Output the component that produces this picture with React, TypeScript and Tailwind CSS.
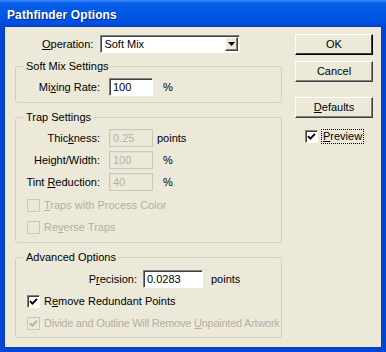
import React from 'react';

const font = 'font-["Liberation_Sans",Arial,sans-serif]';

type FieldProps = { value: string; width: string; disabled?: boolean };

const Field: React.FC<FieldProps> = ({ value, width, disabled }) =>
  disabled ? (
    <div
      className={`${width} h-[18px] flex items-center pl-[3px] border border-[#cbc8bb] bg-[#ece9d8] text-[#b3b0a2] shadow-[inset_1px_1px_0_#e2dfd2]`}
    >
      {value}
    </div>
  ) : (
    <div
      className={`${width} h-[18px] flex items-center pl-[3px] border border-t-[#808080] border-l-[#808080] border-r-white border-b-white bg-white text-black shadow-[inset_1px_1px_0_#404040]`}
    >
      {value}
    </div>
  );

const Check: React.FC<{ checked?: boolean; disabled?: boolean }> = ({ checked, disabled }) => (
  <div
    className={
      disabled
        ? 'w-[13px] h-[13px] shrink-0 flex items-center justify-center border border-[#cbc8bb] bg-[#ece9d8]'
        : 'w-[13px] h-[13px] shrink-0 flex items-center justify-center border border-t-[#808080] border-l-[#808080] border-r-white border-b-white bg-white shadow-[inset_1px_1px_0_#404040]'
    }
  >
    {checked && (
      <svg width="9" height="9" viewBox="0 0 9 9">
        <path
          d="M1 4.2 L3.4 6.6 L8 1.8"
          fill="none"
          stroke={disabled ? '#b3b0a2' : '#000'}
          strokeWidth="1.9"
        />
      </svg>
    )}
  </div>
);

const CheckRow: React.FC<{
  checked?: boolean;
  disabled?: boolean;
  tight?: boolean;
  children: React.ReactNode;
}> = ({ checked, disabled, tight, children }) => (
  <div className="h-[18px] flex items-center pl-[11px]">
    <Check checked={checked} disabled={disabled} />
    <span
      className={`ml-[4px] whitespace-nowrap ${disabled ? 'text-[#b3b0a2]' : 'text-black'} ${
        tight ? 'tracking-[-0.25px]' : ''
      }`}
    >
      {children}
    </span>
  </div>
);

const Group: React.FC<{ title: string; className: string; children: React.ReactNode }> = ({
  title,
  className,
  children,
}) => (
  <fieldset className={`min-w-0 w-[267px] border border-[#d0d0bf] rounded-[3px] ${className}`}>
    <legend className="ml-[8px] px-[2px] leading-[13px] text-black">{title}</legend>
    {children}
  </fieldset>
);

const Button: React.FC<{ children: React.ReactNode; primary?: boolean; className?: string }> = ({
  children,
  primary,
  className = '',
}) => (
  <div
    className={`w-[78px] h-[21px] flex items-center justify-center bg-[#ece9d8] text-black border border-t-white border-l-white ${
      primary
        ? 'border-r-black border-b-black shadow-[inset_-1px_-1px_0_#404040]'
        : 'border-r-[#404040] border-b-[#404040] shadow-[inset_-1px_-1px_0_#808080]'
    } ${className}`}
  >
    {children}
  </div>
);

export default function App() {
  return (
    <div className={`w-[386px] h-[352px] flex flex-col bg-[#0047d8] text-[11px] ${font} select-none`}>
      {/* title bar */}
      <div className="h-[27px] shrink-0 flex items-center pl-[7px] pt-[2px] bg-[linear-gradient(#3a8cff_0px,#0a5ee9_3px,#0058e6_50%,#0050e0_85%,#0041c9_100%)]">
        <span className="text-white font-bold text-[12px] tracking-[0.1px] [text-shadow:1px_1px_0_#0a2a8a]">
          Pathfinder Options
        </span>
      </div>

      {/* client area */}
      <div className="flex-1 mx-[4px] mb-[4px] flex bg-[#ece9d8] border-l border-r border-b border-[#0a3cc0]">
        {/* left column */}
        <div className="ml-[10px] w-[267px] flex flex-col">
          <div className="mt-[8px] h-[18px] flex items-center">
            <span className="ml-[27px]">
              <span className="underline">O</span>peration:
            </span>
            <div className="ml-[7px] w-[140px] h-[18px] flex items-center border border-t-[#808080] border-l-[#808080] border-r-white border-b-white bg-white shadow-[inset_1px_1px_0_#404040]">
              <span className="flex-1 pl-[3px]">Soft Mix</span>
              <div className="w-[13px] h-[14px] mr-[1px] flex items-center justify-center bg-[#ece9d8] border border-t-white border-l-white border-r-[#404040] border-b-[#404040] shadow-[inset_-1px_-1px_0_#808080]">
                <svg width="7" height="4" viewBox="0 0 7 4">
                  <path d="M0 0 H7 L3.5 4 Z" fill="#000" />
                </svg>
              </div>
            </div>
          </div>

          <Group title="Soft Mix Settings" className="mt-[7px] pt-[5px] pb-[6px]">
            <div className="h-[18px] flex items-center">
              <span className="w-[84px] text-right">
                Mi<span className="underline">x</span>ing Rate:
              </span>
              <div className="ml-[9px]">
                <Field value="100" width="w-[44px]" />
              </div>
              <span className="ml-[10px]">%</span>
            </div>
          </Group>

          <Group title="Trap Settings" className="mt-[8px] pt-[5px] pb-[6px] flex flex-col gap-[4px]">
            <div className="h-[18px] flex items-center">
              <span className="w-[84px] text-right">
                Thic<span className="underline">k</span>ness:
              </span>
              <div className="ml-[9px]">
                <Field value="0.25" width="w-[44px]" disabled />
              </div>
              <span className="ml-[4px]">points</span>
            </div>
            <div className="h-[18px] flex items-center">
              <span className="w-[84px] text-right">Height/Width:</span>
              <div className="ml-[9px]">
                <Field value="100" width="w-[44px]" disabled />
              </div>
              <span className="ml-[10px]">%</span>
            </div>
            <div className="h-[18px] flex items-center">
              <span className="w-[84px] text-right">
                Tint <span className="underline">R</span>eduction:
              </span>
              <div className="ml-[9px]">
                <Field value="40" width="w-[44px]" disabled />
              </div>
              <span className="ml-[10px]">%</span>
            </div>
            <div className="mt-[1px] flex flex-col gap-[4px]">
              <CheckRow disabled>
                <span className="underline">T</span>raps with Process Color
              </CheckRow>
              <CheckRow disabled>
                Re<span className="underline">v</span>erse Traps
              </CheckRow>
            </div>
          </Group>

          <Group title="Advanced Options" className="mt-[8px] pt-[6px] pb-[5px] flex flex-col gap-[4px]">
            <div className="h-[18px] flex items-center">
              <span className="w-[121px] text-right">
                P<span className="underline">r</span>ecision:
              </span>
              <div className="ml-[6px]">
                <Field value="0.0283" width="w-[60px]" />
              </div>
              <span className="ml-[8px]">points</span>
            </div>
            <CheckRow checked>
              R<span className="underline">e</span>move Redundant Points
            </CheckRow>
            <CheckRow checked disabled tight>
              Divide and Outline Will Remove <span className="underline">U</span>npainted Artwork
            </CheckRow>
          </Group>
        </div>

        {/* right column */}
        <div className="ml-[13px] w-[78px] flex flex-col">
          <Button primary className="mt-[7px]">
            OK
          </Button>
          <Button className="mt-[6px]">Cancel</Button>
          <Button className="mt-[15px]">
            <span>
              <span className="underline">D</span>efaults
            </span>
          </Button>
          <div className="mt-[10px] h-[16px] flex items-center pl-[10px]">
            <Check checked />
            <span className="ml-[3px] px-[1px] border border-dotted border-black leading-[13px]">
              <span className="underline">P</span>review
            </span>
          </div>
        </div>
      </div>
    </div>
  );
}
